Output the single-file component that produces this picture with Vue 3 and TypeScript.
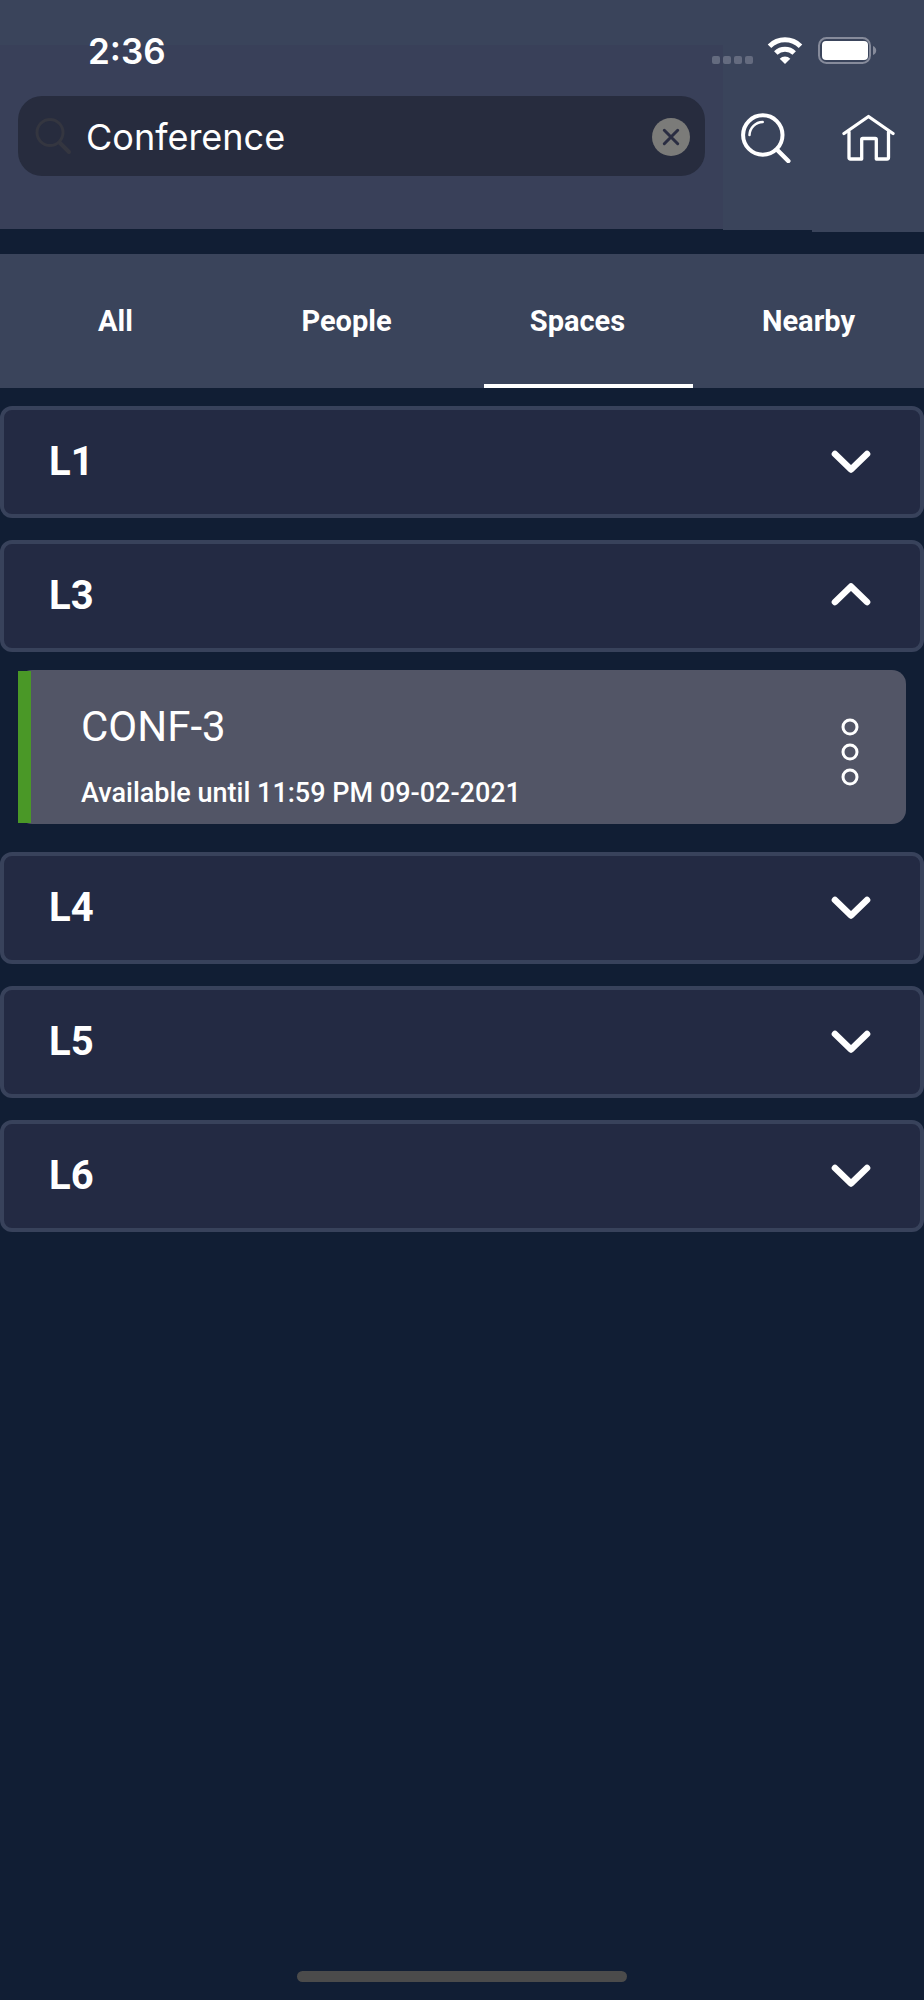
<script setup lang="ts">
import { ref } from 'vue'

interface Space {
  name: string
  status: string
}

interface Level {
  name: string
  open: boolean
  spaces: Space[]
}

const query = ref('Conference')
const tabs: string[] = ['All', 'People', 'Spaces', 'Nearby']
const activeTab = ref('Spaces')

const levels = ref<Level[]>([
  { name: 'L1', open: false, spaces: [] },
  {
    name: 'L3',
    open: true,
    spaces: [{ name: 'CONF-3', status: 'Available until 11:59 PM 09-02-2021' }],
  },
  { name: 'L4', open: false, spaces: [] },
  { name: 'L5', open: false, spaces: [] },
  { name: 'L6', open: false, spaces: [] },
])
</script>

<template>
  <div class="screen">
    <header class="header">
      <div class="status">
        <span class="time">2:36</span>
        <svg class="indicators" width="168" height="32" viewBox="0 0 168 32" aria-hidden="true">
          <g fill="#646b7f">
            <rect x="3" y="21" width="8" height="8" rx="2" />
            <rect x="14" y="21" width="8" height="8" rx="2" />
            <rect x="25" y="21" width="8" height="8" rx="2" />
            <rect x="36" y="21" width="8" height="8" rx="2" />
          </g>
          <g fill="none" stroke="#fff" stroke-width="5">
            <path d="M60.500 11.200A22 22 0 0 1 91.500 11.200" />
            <path d="M66.800 18A13.300 13.300 0 0 1 85.200 18" />
          </g>
          <path d="M76 29L70.700 23.700A7.600 7.600 0 0 1 81.300 23.700Z" fill="#fff" />
          <rect x="110" y="3" width="51" height="25" rx="7.500" fill="none" stroke="#868b9b" stroke-width="2" />
          <rect x="113" y="6" width="46" height="19" rx="4" fill="#fff" />
          <path d="M164 11Q167.200 12.500 167.200 15.500T164 20Z" fill="#868b9b" />
        </svg>
      </div>

      <form class="bar" @submit.prevent>
        <div class="field">
          <svg class="glass" width="38" height="38" viewBox="0 0 38 38" aria-hidden="true">
            <circle cx="16" cy="14.500" r="13" />
            <path d="M25.500 24.500L35 34" stroke-width="4" />
          </svg>
          <input v-model="query" type="text" aria-label="Search" />
          <button class="clear" type="button" aria-label="Clear" @click="query = ''">
            <svg width="38" height="38" viewBox="0 0 38 38">
              <circle cx="19" cy="19" r="19" fill="#7b7b79" />
              <path d="M12.300 12.300L25.700 25.700M25.700 12.300L12.300 25.700" stroke="#2a2d42" stroke-width="3" stroke-linecap="round" />
            </svg>
          </button>
        </div>
        <button class="action" type="submit" aria-label="Run search">
          <svg width="54" height="54" viewBox="0 0 54 54" fill="none" stroke="#fff" stroke-linecap="round">
            <circle cx="24.800" cy="26" r="19.700" stroke-width="4" />
            <path d="M11.500 26A13.500 13.500 0 0 1 24.700 13" stroke-width="2.500" />
            <path d="M39.300 41L50.300 52" stroke-width="4.500" />
          </svg>
        </button>
        <button class="action" type="button" aria-label="Home">
          <svg width="54" height="54" viewBox="0 0 54 54" fill="none" stroke="#fff" stroke-width="3.300" stroke-linecap="round" stroke-linejoin="round">
            <path d="M3 24.500L27.500 7.500L52 24.500" />
            <path d="M8 23V48.500Q8 50 9.500 50H20.700V30.500Q20.700 29.500 21.700 29.500H34.300Q35.300 29.500 35.300 30.500V50H46Q47.500 50 47.500 48.500V23" />
          </svg>
        </button>
      </form>
    </header>

    <nav class="tabs" role="tablist">
      <button
        v-for="tab in tabs"
        :key="tab"
        type="button"
        role="tab"
        class="tab"
        :class="{ active: tab === activeTab }"
        :aria-selected="tab === activeTab"
        @click="activeTab = tab"
      >
        {{ tab }}
      </button>
    </nav>

    <main class="levels">
      <section v-for="level in levels" :key="level.name">
        <button type="button" class="level" :aria-expanded="level.open" @click="level.open = !level.open">
          <span>{{ level.name }}</span>
          <svg width="42" height="42" viewBox="0 0 42 42" fill="none" stroke="#fff" stroke-width="6.600" stroke-linecap="round" stroke-linejoin="round" aria-hidden="true">
            <path v-if="level.open" d="M5 27L21 11.500L37 27" />
            <path v-else d="M5 13L21 28.500L37 13" />
          </svg>
        </button>
        <template v-if="level.open">
          <article v-for="space in level.spaces" :key="space.name" class="space">
            <div class="details">
              <h2>{{ space.name }}</h2>
              <p>{{ space.status }}</p>
            </div>
            <button type="button" class="more" aria-label="More options">
              <svg width="20" height="70" viewBox="0 0 20 70" fill="none" stroke="#fff" stroke-width="3">
                <circle cx="10" cy="10" r="7" />
                <circle cx="10" cy="35" r="7" />
                <circle cx="10" cy="60" r="7" />
              </svg>
            </button>
          </article>
        </template>
      </section>
    </main>

    <footer class="foot"><div class="grip"></div></footer>
  </div>
</template>

<style>
body {
  margin: 0;
  background: #111e34;
}
</style>

<style scoped>
.screen {
  display: flex;
  flex-direction: column;
  min-height: 100vh;
  background: #111e34;
  color: #fff;
  font-family: Roboto, "Liberation Sans", sans-serif;
}

button {
  margin: 0;
  padding: 0;
  border: 0;
  background: none;
  color: inherit;
  font: inherit;
  cursor: pointer;
}

svg {
  display: block;
}

.header {
  height: 232px;
  background:
    linear-gradient(#394059, #394059) 0 45px / calc(100% - 201px) 184px no-repeat,
    linear-gradient(#3a445b, #3a445b) 0 0 / 100% 229px no-repeat,
    linear-gradient(#3a445b, #3a445b) 100% 0 / 201px 230px no-repeat,
    linear-gradient(#3a445b, #3a445b) 100% 0 / 112px 232px no-repeat;
}

.status {
  display: flex;
  align-items: center;
  justify-content: space-between;
  height: 96px;
  box-sizing: border-box;
  padding: 6px 47px 0 88px;
}

.time {
  font: 600 35px/44px Inter, sans-serif;
}

.bar {
  display: flex;
  align-items: center;
  padding: 0 29px 0 18px;
}

.field {
  display: flex;
  flex: 1;
  align-items: center;
  min-width: 0;
  height: 80px;
  box-sizing: border-box;
  padding: 2px 15px 0 16px;
  margin-right: 33px;
  border-radius: 24px;
  background: #272c3e;
}

.glass {
  flex: none;
  fill: none;
  stroke: #343640;
  stroke-width: 3;
  stroke-linecap: round;
}

.field input {
  flex: 1;
  min-width: 0;
  height: 64px;
  padding: 0 14px;
  border: 0;
  outline: 0;
  background: transparent;
  color: #fff;
  font: 400 36px/44px Inter, sans-serif;
}

.action + .action {
  margin-left: 49px;
}

.tabs {
  display: grid;
  grid-template-columns: repeat(4, 1fr);
  height: 134px;
  margin-top: 22px;
  background: #3a445b;
}

.tab {
  position: relative;
  font-size: 29px;
  font-weight: 700;
  line-height: 36px;
}

.tab.active::after {
  content: "";
  position: absolute;
  right: 0;
  bottom: 0;
  left: 22px;
  height: 4px;
  background: #fff;
}

.levels {
  display: flex;
  flex: 1;
  flex-direction: column;
  gap: 22px;
  padding-top: 18px;
}

.level {
  display: flex;
  align-items: center;
  justify-content: space-between;
  width: 100%;
  height: 112px;
  box-sizing: border-box;
  padding: 0 48px 0 45px;
  border: 4px solid #38425b;
  border-radius: 12px;
  background: #232a43;
  font-size: 40px;
  font-weight: 700;
  line-height: 48px;
}

.space {
  display: flex;
  align-items: center;
  justify-content: space-between;
  height: 154px;
  box-sizing: border-box;
  margin: 18px 18px 6px;
  padding-right: 46px;
  border-radius: 14px;
  background: #525566;
}

.details {
  height: 152px;
  box-sizing: border-box;
  padding: 30px 0 0 50px;
  border-left: 13px solid #4a9827;
}

.details h2 {
  margin: 0;
  font-size: 42px;
  font-weight: 400;
  line-height: 52px;
}

.details p {
  margin: 22px 0 0;
  font-size: 27px;
  font-weight: 500;
  line-height: 36px;
}

.more {
  padding-top: 10px;
}

.foot {
  display: flex;
  justify-content: center;
  padding: 18px 0;
}

.grip {
  width: 330px;
  max-width: 60%;
  height: 11px;
  border-radius: 6px;
  background: #4b4b4b;
}
</style>
